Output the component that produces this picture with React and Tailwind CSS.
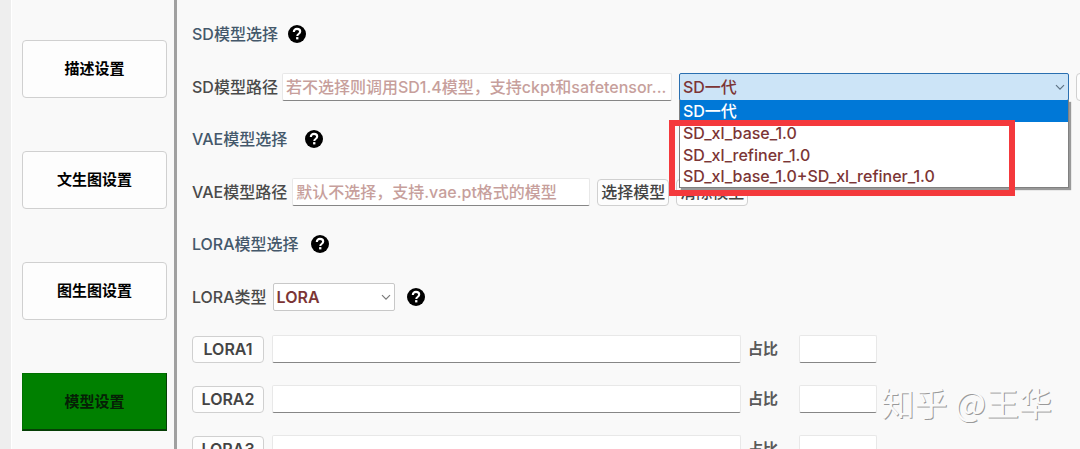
import { useState } from 'react';

const TABS = ['描述设置', '文生图设置', '图生图设置', '模型设置'];
const SD_MODELS = ['SD一代', 'SD_xl_base_1.0', 'SD_xl_refiner_1.0', 'SD_xl_base_1.0+SD_xl_refiner_1.0'];
const LORA_SLOTS = ['LORA1', 'LORA2', 'LORA3'];

function HelpButton({ topic, className = '' }) {
  return (
    <button type="button" aria-label={`${topic}帮助`} className={`shrink-0 ${className}`}>
      <svg viewBox="0 0 18 18" className="w-[18px] h-[18px]" aria-hidden="true">
        <circle cx="9" cy="9" r="9" fill="#000" />
        <path
          d="M5.8 7C5.8 5 7.1 3.9 9 3.9c1.9 0 3.2 1.1 3.2 2.7 0 1.2-.7 1.8-1.6 2.4-.9.6-1.3 1-1.3 1.9"
          fill="none"
          stroke="#fff"
          strokeWidth="2.1"
        />
        <rect x="8.1" y="12.1" width="2.3" height="2.3" fill="#fff" />
      </svg>
    </button>
  );
}

function SelectArrow({ className }) {
  return (
    <svg
      viewBox="0 0 10 10"
      className={`absolute right-1 top-[9px] w-[10px] h-[10px] pointer-events-none ${className}`}
      aria-hidden="true"
    >
      <path d="M1 3.2 5 7.2 9 3.2" fill="none" stroke="currentColor" strokeWidth="1.2" />
    </svg>
  );
}

function TextField({ className = '', ...props }) {
  return (
    <input
      type="text"
      className={`h-7 min-w-0 px-[3px] bg-white border border-[#e8e8e8] border-b-[#868686] rounded-[2px] outline-none placeholder:text-[#c79f9c] placeholder:opacity-100 ${className}`}
      {...props}
    />
  );
}

function SmallButton({ className = '', children }) {
  return (
    <button
      type="button"
      className={`h-[27px] shrink-0 bg-[#fdfdfd] border border-[#d0d0d0] rounded text-[#444] whitespace-nowrap ${className}`}
    >
      {children}
    </button>
  );
}

function Sidebar({ active, onSelect }) {
  return (
    <nav className="w-[177px] shrink-0 flex border-r-[3px] border-[#a0a0a0]">
      <div className="w-3 shrink-0 bg-[#eeeeee] border-r border-white" />
      <div className="flex-1 flex flex-col gap-[53px] pt-10 pl-[10px] pr-[7px]">
        {TABS.map((tab) => (
          <button
            key={tab}
            type="button"
            onClick={() => onSelect(tab)}
            className={
              tab === active
                ? 'h-[58px] shrink-0 bg-[#008000] border border-[#007000] border-r-[#063f06] border-b-2 border-b-[#063f06] text-[#062006] font-bold text-[15px]'
                : 'h-[58px] shrink-0 bg-[#fdfdfd] border border-[#d0d0d0] rounded text-black font-bold text-[15px]'
            }
          >
            {tab}
          </button>
        ))}
      </div>
    </nav>
  );
}

function SectionTitle({ children, gap }) {
  return (
    <div className={`h-7 flex items-center ${gap}`}>
      <h2 className="text-[#44586b]">{children}</h2>
      <HelpButton topic={children} />
    </div>
  );
}

function ModelSelect() {
  const [model, setModel] = useState(SD_MODELS[0]);

  return (
    <div className="relative min-w-0">
      <select
        aria-label="SD模型"
        value={model}
        onChange={(e) => setModel(e.target.value)}
        className="w-full h-7 px-[3px] appearance-none bg-[#cce4f7] border border-[#2a6fb0] rounded-[2px] text-[#7c3535] outline-none"
      >
        {SD_MODELS.map((name) => (
          <option key={name}>{name}</option>
        ))}
      </select>
      <SelectArrow className="text-[#5f7385]" />

      {/* Open list */}
      <ul
        role="listbox"
        aria-label="SD模型列表"
        className="absolute z-10 top-[27px] inset-x-0 bg-white border border-[#808080] border-t-0 shadow-[2px_2px_1px_#999] pb-px"
      >
        {SD_MODELS.map((name) => (
          <li
            key={name}
            role="option"
            aria-selected={name === model}
            onClick={() => setModel(name)}
            className={`px-[3px] leading-[22px] last:leading-[20px] whitespace-nowrap ${
              name === model ? 'bg-[#0078d7] text-white' : 'text-[#7c3535]'
            }`}
          >
            {name}
          </li>
        ))}
      </ul>

      {/* Highlight around the XL models */}
      <div className="absolute z-20 top-[47px] -left-[10px] w-[346px] h-[76px] border-[6px] border-[#f4393c] pointer-events-none" />
    </div>
  );
}

export default function App() {
  const [tab, setTab] = useState('模型设置');

  return (
    <div className="relative flex h-screen overflow-hidden bg-[#f9f9f9] text-[16px] leading-[22px] text-[#4a4a4a] font-medium font-[Inter,'Noto_Sans_CJK_SC',sans-serif]">
      <Sidebar active={tab} onSelect={setTab} />

      <main className="flex-1 min-w-0 flex flex-col gap-6 pt-5 pl-[15px] overflow-hidden">
        <section className="flex flex-col gap-[25px]">
          <SectionTitle gap="gap-[10px]">SD模型选择</SectionTitle>
          <div className="flex items-center">
            <label htmlFor="sd-path" className="shrink-0 mr-1">SD模型路径</label>
            <div className="flex-1 min-w-0 grid grid-cols-2 gap-[7px]">
              <TextField id="sd-path" placeholder="若不选择则调用SD1.4模型，支持ckpt和safetensor..." />
              <ModelSelect />
            </div>
            <button
              type="button"
              aria-label="选择SD模型"
              className="w-20 h-7 shrink-0 ml-[7px] -mr-[76px] bg-[#fdfdfd] border border-[#d0d0d0] rounded"
            />
          </div>
        </section>

        <section className="flex flex-col gap-[25px]">
          <SectionTitle gap="gap-[18px]">VAE模型选择</SectionTitle>
          <div className="flex items-center">
            <label htmlFor="vae-path" className="shrink-0 mr-[5px]">VAE模型路径</label>
            <TextField id="vae-path" className="w-[298px]" placeholder="默认不选择，支持.vae.pt格式的模型" />
            <SmallButton className="w-[72px] ml-[7px]">选择模型</SmallButton>
            <SmallButton className="w-[72px] ml-[7px]">清除模型</SmallButton>
          </div>
        </section>

        <section className="flex flex-col gap-[25px]">
          <SectionTitle gap="gap-3">LORA模型选择</SectionTitle>
          <div className="flex items-center">
            <label htmlFor="lora-type" className="shrink-0 mr-[6px]">LORA类型</label>
            <div className="relative w-[122px]">
              <select
                id="lora-type"
                className="w-full h-7 px-[3px] appearance-none bg-white border border-[#c8c8c8] rounded-[2px] text-[#7c3535] font-semibold outline-none"
              >
                <option>LORA</option>
              </select>
              <SelectArrow className="text-[#7a7a7a]" />
            </div>
            <HelpButton topic="LORA类型" className="ml-3" />
          </div>
        </section>

        <section className="flex flex-col gap-[22px]">
          {LORA_SLOTS.map((slot) => (
            <div key={slot} className="flex items-center">
              <SmallButton className="w-[72px] font-semibold">{slot}</SmallButton>
              <TextField aria-label={slot} className="w-[469px] ml-2" />
              <label htmlFor={`${slot}-ratio`} className="w-[51px] ml-[7px] text-[15px] font-bold text-[#5a5a5a]">
                占比
              </label>
              <TextField id={`${slot}-ratio`} className="w-[78px]" />
            </div>
          ))}
        </section>
      </main>

      <div className="absolute right-7 bottom-[27px] text-[33px] leading-10 font-normal text-[#fafafa] [text-shadow:1px_1px_0_#9a9a9a] font-['Noto_Sans_CJK_SC',sans-serif] pointer-events-none">
        知乎 @王华
      </div>
    </div>
  );
}
